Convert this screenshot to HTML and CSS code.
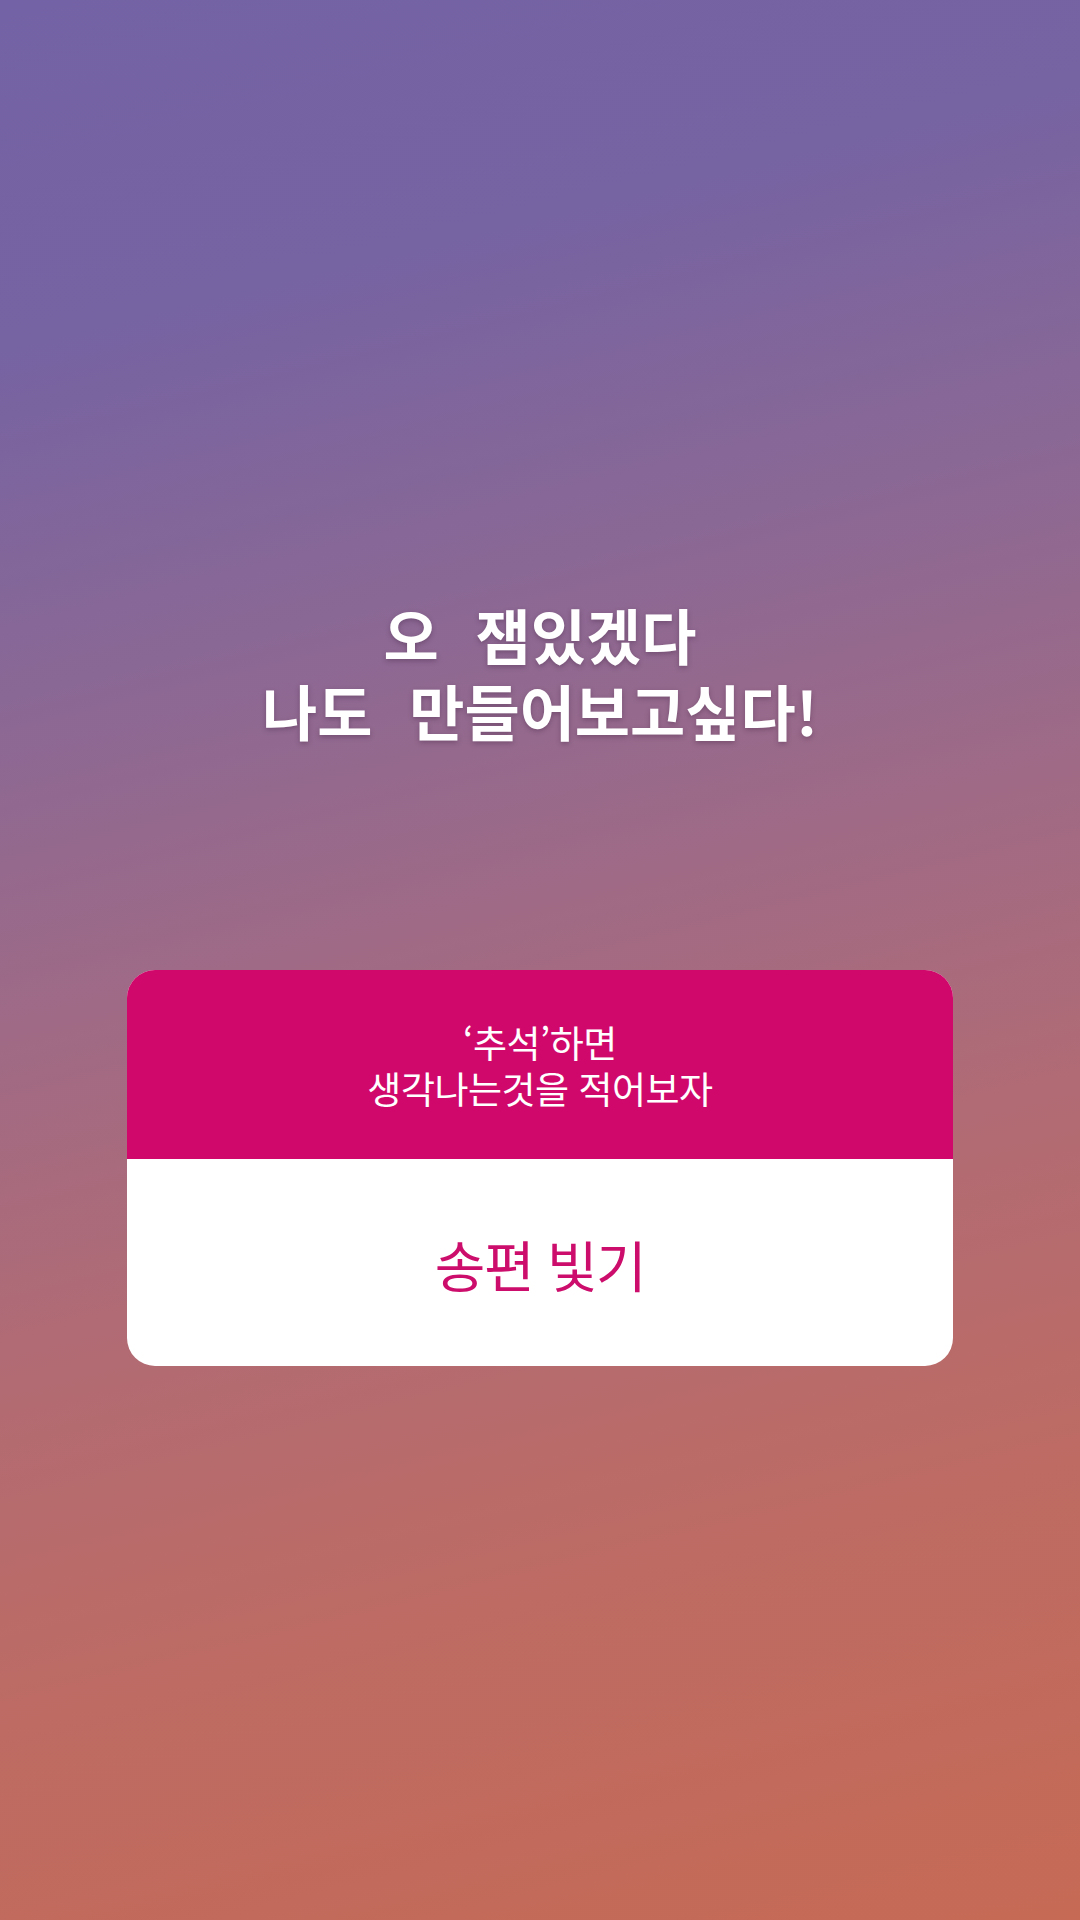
FILE: index.html
```html
<!DOCTYPE html>
<html lang="ko">
<head>
<meta charset="utf-8">
<title>Story</title>
<link rel="stylesheet" href="styles.css">
</head>
<body>
<main class="story">
  <div class="caption">
    <div class="caption-line">오 잼있겠다</div>
    <div class="caption-line">나도 만들어보고싶다!</div>
  </div>
  <section class="question">
    <header class="question-head">
      <div class="question-line">‘추석’하면</div>
      <div class="question-line">생각나는것을 적어보자</div>
    </header>
    <div class="question-answer">송편 빛기</div>
  </section>
</main>
</body>
</html>
```

FILE: styles.css
```css
html, body {
  margin: 0;
  padding: 0;
}
body {
  width: 1080px;
  height: 1920px;
  overflow: hidden;
  font-family: "Noto Sans CJK KR", "Noto Sans", sans-serif;
}
.story {
  width: 1080px;
  height: 1920px;
  display: flex;
  flex-direction: column;
  align-items: center;
  background: linear-gradient(166deg, #7362a5 0%, #7663a2 16%, #8a6895 32%, #9f6a86 47%, #b16b74 62%, #bd6b64 78%, #c66a55 100%);
}
.caption {
  margin-top: 596px;
  text-align: center;
  color: #ffffff;
  font-size: 60px;
  font-weight: 700;
  line-height: 76px;
  word-spacing: 20px;
  letter-spacing: 0;
  text-shadow: 0 2px 5px rgba(60, 30, 60, 0.35);
}
.question {
  margin-top: 222px;
  width: 826px;
  border-radius: 28px;
  overflow: hidden;
  background: #ffffff;
}
.question-head {
  background: #d1086b;
  color: #ffffff;
  height: 189px;
  box-sizing: border-box;
  padding-top: 49px;
  text-align: center;
  font-size: 37px;
  line-height: 46px;
  letter-spacing: -0.5px;
  font-weight: 400;
}
.question-line {
  height: 46px;
}
.question-answer {
  height: 207px;
  display: flex;
  align-items: center;
  justify-content: center;
  color: #cc0d6b;
  font-size: 55px;
  font-weight: 400;
  letter-spacing: -1.5px;
}
```
